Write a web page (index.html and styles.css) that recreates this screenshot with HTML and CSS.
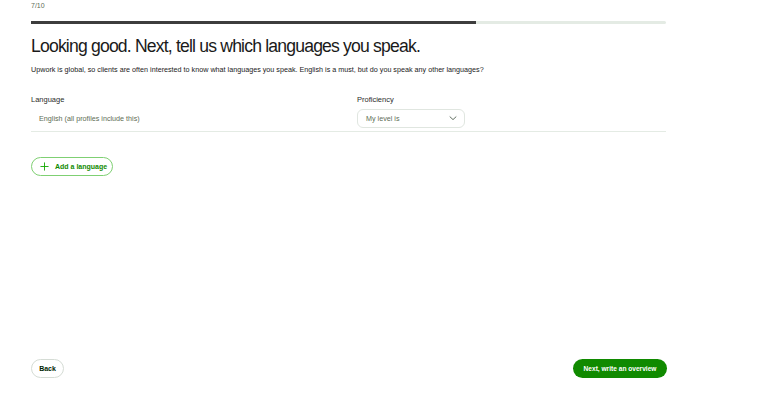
FILE: index.html
```html
<!DOCTYPE html>
<html lang="en">
<head>
  <meta charset="UTF-8">
  <title>Languages</title>
  <link rel="stylesheet" href="styles.css">
</head>
<body>

  <div class="page">
    <div class="step">7/10</div>
    <div class="progress"><div class="progress-fill"></div></div>

    <h1>Looking good. Next, tell us which languages you speak.</h1>
    <p class="intro">Upwork is global, so clients are often interested to know what languages you speak. English is a must, but do you speak any other languages?</p>

    <div class="lang-table">
      <div class="lang-head">
        <div class="col-lang">Language</div>
        <div class="col-level">Proficiency</div>
      </div>
      <div class="lang-row">
        <div class="col-lang lang-name">English (all profiles include this)</div>
        <div class="col-level">
          <div class="select">
            <span>My level is</span>
            <svg width="10" height="10" viewBox="0 0 10 10"><path d="M2 3.8 L5 6.6 L8 3.8" fill="none" stroke="#3a4a3a" stroke-width="0.8" stroke-linecap="round" stroke-linejoin="round"/></svg>
          </div>
        </div>
      </div>
    </div>

    <button class="btn-add">
      <svg width="9" height="9" viewBox="0 0 10 10"><path d="M5 0.5 V9.5 M0.5 5 H9.5" stroke="#14a800" stroke-width="1"/></svg>
      <span>Add a language</span>
    </button>

    <div class="footer">
      <button class="btn-back">Back</button>
      <button class="btn-next">Next, write an overview</button>
    </div>
  </div>

</body>
</html>
```

FILE: styles.css
```css
body {
  margin: 0;
  font-family: "Liberation Sans", Arial, sans-serif;
  color: #001e00;
  background: #fff;
}

.page {
  width: 635px;
  margin-left: 31px;
  height: 412px;
  display: flex;
  flex-direction: column;
}

.step {
  font-size: 7px;
  color: #5e6d55;
  padding-top: 2px;
  height: 16px;
}

.progress {
  height: 3px;
  background: #e4ebe4;
  border-radius: 2px;
  margin-top: 3px;
}

.progress-fill {
  width: 70%;
  height: 100%;
  background: #3d3d3d;
}

h1 {
  font-size: 17.6px;
  font-weight: normal;
  margin: 12px 0 0;
  letter-spacing: -0.82px;
  color: #1a1a1a;
}

.intro {
  font-size: 7.2px;
  margin: 8px 0 0;
  color: #1a1a1a;
}

.lang-table {
  margin-top: 20px;
  border-bottom: 1px solid #e4ebe4;
}

.lang-head,
.lang-row {
  display: flex;
  align-items: center;
}

.lang-head {
  font-size: 7.5px;
  height: 11px;
  color: #2a2a2a;
}

.lang-row {
  height: 26px;
}

.col-lang {
  width: 326px;
}

.lang-name {
  font-size: 7.2px;
  color: #5e6d55;
  padding-left: 8px;
  box-sizing: border-box;
}

.select {
  width: 108px;
  height: 19px;
  box-sizing: border-box;
  border: 1px solid #e0e6e0;
  border-radius: 6px;
  display: flex;
  align-items: center;
  justify-content: space-between;
  padding: 0 6px 0 8px;
  font-size: 7.2px;
  color: #5e6d55;
}

button {
  font-family: "Liberation Sans", Arial, sans-serif;
  font-size: 7px;
  font-weight: bold;
  border-radius: 10px;
  height: 19px;
  cursor: pointer;
}

.btn-add {
  align-self: flex-start;
  margin-top: 25px;
  width: 82px;
  background: #fff;
  color: #108a00;
  border: 1px solid #7fd073;
  display: flex;
  align-items: center;
  gap: 6px;
  padding: 0 0 0 8px;
  white-space: nowrap;
}

.footer {
  margin-top: auto;
  margin-bottom: 34px;
  display: flex;
  justify-content: space-between;
}

.btn-back {
  width: 33px;
  background: #fff;
  color: #001e00;
  border: 1px solid #d5dcd5;
  padding: 0;
}

.btn-next {
  width: 94px;
  background: #108a00;
  color: #fff;
  border: none;
  padding: 0;
  font-size: 6.6px;
  margin-right: -1px;
}
```
